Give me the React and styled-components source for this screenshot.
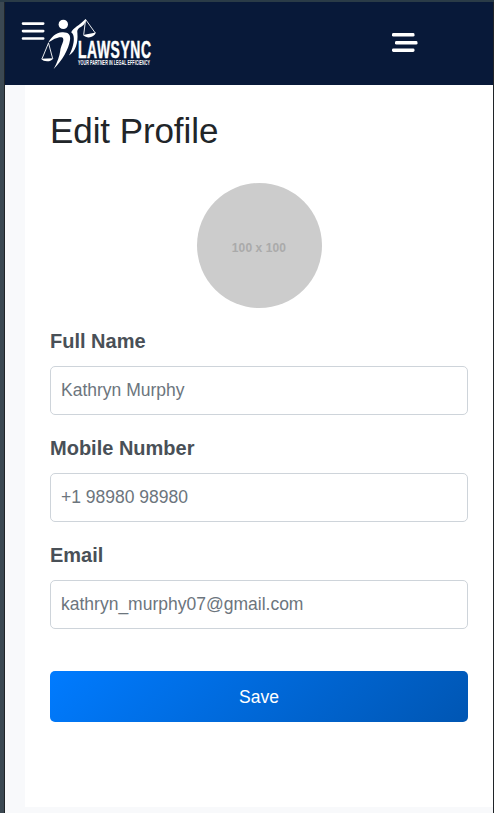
import React from "react";
import styled, { createGlobalStyle } from "styled-components";

const GlobalStyle = createGlobalStyle`
  * { box-sizing: border-box; }
  body { margin: 0; background: #f8f9fa; font-family: "Liberation Sans", Arial, sans-serif; }
`;

const Frame = styled.div`
  height: 813px;
  display: flex;
  flex-direction: column;
  border-top: 2px solid #2a3b47;
  overflow: hidden;
`;

const Body = styled.div`
  flex: 1;
  display: grid;
  grid-template-columns: 4px 1px 1fr 1px;
`;

const Edge = styled.div`
  background: ${(p) => p.$color};
`;

const Page = styled.div`
  background: #f8f9fb;
  display: flex;
  flex-direction: column;
`;

const Header = styled.header`
  height: 83px;
  background: #081939;
  display: flex;
  align-items: flex-start;
  justify-content: space-between;
`;

const Brand = styled.svg`
  display: block;
  width: 155px;
  height: 83px;
  overflow: visible;
`;

const LogoText = styled.text`
  font-family: "Liberation Sans", Arial, sans-serif;
  font-weight: 700;
  font-size: ${(p) => p.$size}px;
  letter-spacing: ${(p) => p.$gap}px;
  stroke: #fff;
  stroke-width: ${(p) => p.$weight}px;
`;

const MenuButton = styled.button`
  border: 0;
  padding: 0;
  margin: 30px 75px 0 0;
  background: none;
  display: flex;
`;

const Card = styled.main`
  height: 722px;
  margin-left: 20px;
  padding: 25px;
  background: #fff;
`;

const Title = styled.h1`
  margin: 0;
  font-size: 35px;
  font-weight: 400;
  line-height: 42px;
  letter-spacing: -0.08px;
  color: #212529;
`;

const Avatar = styled.div`
  width: 125px;
  height: 125px;
  margin: 31px auto 20px;
  border-radius: 50%;
  background: #ccc;
  color: #aaa;
  display: flex;
  align-items: center;
  justify-content: center;
  padding-top: 4px;
  font: 700 12px "Liberation Sans", Arial, sans-serif;
  letter-spacing: 0.1px;
`;

const Field = styled.div`
  height: 107px;
`;

const Label = styled.label`
  display: block;
  height: 38px;
  line-height: 26px;
  font-size: 20px;
  font-weight: 700;
  color: #495057;
`;

const Input = styled.input`
  display: block;
  width: 100%;
  height: 49px;
  padding: 0 10px;
  border: 1px solid #ced4da;
  border-radius: 5px;
  background: #fff;
  font: 17.5px "Liberation Sans", Arial, sans-serif;
  color: #6c757d;
  outline: none;
`;

const SaveButton = styled.button`
  display: block;
  width: 100%;
  height: 51px;
  margin-top: 22px;
  padding: 2px 0 0;
  border: 0;
  border-radius: 5px;
  background: linear-gradient(135deg, #007bff, #0056b3);
  color: #fff;
  font: 17.5px "Liberation Sans", Arial, sans-serif;
`;

const fields = [
  { id: "name", label: "Full Name", value: "Kathryn Murphy" },
  { id: "mobile", label: "Mobile Number", value: "+1 98980 98980" },
  { id: "email", label: "Email", value: "kathryn_murphy07@gmail.com" },
];

function Logo() {
  return (
    <Brand viewBox="5 2 155 83" fill="#fff">
      <g stroke="#fff" strokeWidth="2.6" strokeLinecap="round">
        <path d="M23 23.6H43.2M23 31.1H43.2M23 38.5H43.2" />
      </g>
      <circle cx="63.3" cy="24.4" r="4.7" />
      <path d="M48 43.2C51 37 56 32.7 62 32.2C68 31.8 71 34.5 70 40C68.8 49 62 61 53.7 69C57.5 62 59.5 56 60.2 51C60.8 45.5 64 42 63.2 38.8C62.4 35.5 54 38 48 43.2Z" />
      <path d="M71.2 32.2C73.8 27.2 79 26 85.5 19C85.8 22 84.5 24.7 81.6 26.5C78.2 28.5 77 29.5 77.4 33C78.2 43 75.5 51.5 69 55.5C71.5 51 74.2 43.5 73.8 38C73.6 35 72.8 33.5 71.2 32.2Z" />
      <g fill="none" stroke="#fff" strokeWidth="0.9">
        <path d="M48.5 43L42 58.8M48.5 43L52.6 58.4M85.6 19.5L83.7 34.8M85.6 19.5L95.3 33" />
      </g>
      <path d="M41 58.8L53.4 58.2C51.5 62 44 62.5 41 58.8Z" />
      <path d="M83 35L96 32.5C94.3 37.6 87 39.2 83 35Z" />
      <LogoText x="78" y="57.8" $size={24} $gap={1} $weight={0.5} textLength="73.5" lengthAdjust="spacingAndGlyphs">LAWSYNC</LogoText>
      <LogoText x="78" y="64.6" $size={6.4} $gap={0.1} $weight={0} textLength="72" lengthAdjust="spacingAndGlyphs">YOUR PARTNER IN LEGAL EFFICIENCY</LogoText>
    </Brand>
  );
}

export default function App() {
  return (
    <>
      <GlobalStyle />
      <Frame>
        <Body>
          <Edge $color="#3b4852" />
          <Edge $color="#202428" />
          <Page>
            <Header>
              <Logo />
              <MenuButton aria-label="Menu">
                <svg width="26" height="22" viewBox="0 0 26 22" fill="#fff">
                  <rect x="0" y="1" width="22.5" height="3.6" rx="1.4" />
                  <rect x="3" y="9" width="22.5" height="3.6" rx="1.4" />
                  <rect x="0" y="16.4" width="22.5" height="3.6" rx="1.4" />
                </svg>
              </MenuButton>
            </Header>
            <Card>
              <Title>Edit Profile</Title>
              <Avatar>100 x 100</Avatar>
              {fields.map((f) => (
                <Field key={f.id}>
                  <Label htmlFor={f.id}>{f.label}</Label>
                  <Input id={f.id} defaultValue={f.value} />
                </Field>
              ))}
              <SaveButton>Save</SaveButton>
            </Card>
          </Page>
          <Edge $color="#202428" />
        </Body>
      </Frame>
    </>
  );
}
